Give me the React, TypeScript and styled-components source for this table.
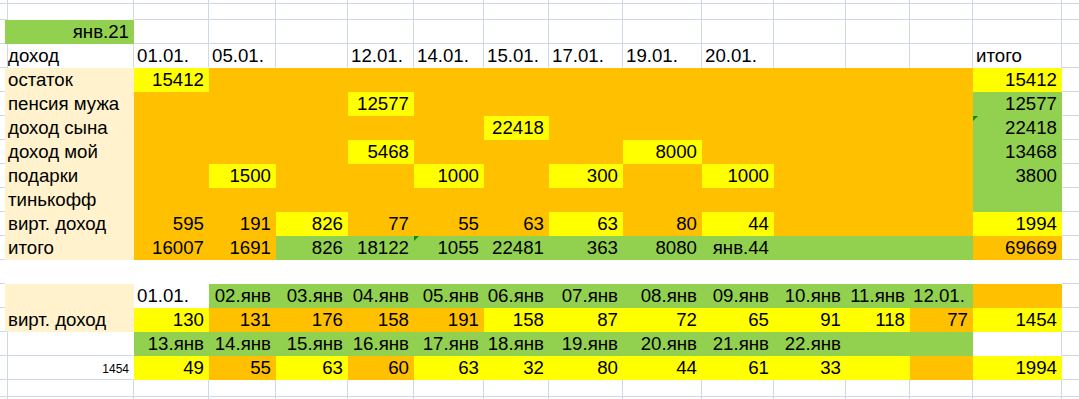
import styled, { createGlobalStyle } from 'styled-components';

type Fill = 'o' | 'y' | 'g' | 'b' | 'w';

interface ICell {
    t?: string;
    f?: Fill;
    flag?: boolean;
    span?: number;
    tiny?: boolean;
    skip?: boolean;
}

const fills: Record<Fill, string> = {
    o: '#FFC000',
    y: '#FFFF00',
    g: '#92D050',
    b: '#FFF2CC',
    w: '#FFFFFF',
};

const GRID_LINE = '#D0D7E5';

const GlobalStyle = createGlobalStyle`
    html, body {
        margin: 0;
        padding: 0;
        background: #fff;
        overflow: hidden;
    }
`;

const Sheet = styled.div`
    display: grid;
    grid-template-columns: 5px 129px 75px 67px 72px 66px 70px 65px 74px 79px 72px 72px 64px 63px 89px 80px;
    grid-template-rows: 4px 16px repeat(15, 24px) 17px 24px;
    width: 1079px;
    height: 399px;
    overflow: hidden;
    font-family: 'Liberation Sans', Arial, sans-serif;
    font-size: 18.67px;
    color: #000;
`;

const Cell = styled.div<{ $fill?: Fill; $right: boolean; $bottom: boolean; $alignRight: boolean; $span: number }>`
    position: relative;
    box-sizing: border-box;
    display: flex;
    align-items: flex-end;
    justify-content: ${({ $alignRight }) => ($alignRight ? 'flex-end' : 'flex-start')};
    grid-row: span ${({ $span }) => $span};
    padding: 0 4px 1px 3px;
    line-height: 20px;
    white-space: nowrap;
    background: ${({ $fill }) => ($fill ? fills[$fill] : 'transparent')};
    border-right: 1px solid ${({ $right }) => ($right ? GRID_LINE : 'transparent')};
    border-bottom: 1px solid ${({ $bottom }) => ($bottom ? GRID_LINE : 'transparent')};
`;

const Tiny = styled.span`
    font-size: 12px;
    line-height: 12px;
    margin-bottom: 3px;
`;

const Flag = styled.span`
    position: absolute;
    top: 0;
    left: 0;
    width: 0;
    height: 0;
    border-top: 5px solid #0b8a0b;
    border-right: 5px solid transparent;
`;

const mk = (f?: Fill) => (t = ''): ICell => ({ t, f });
const o = mk('o');
const y = mk('y');
const g = mk('g');
const b = mk('b');
const e = mk();
const many = (fn: (t?: string) => ICell, n: number) => Array.from({ length: n }, () => fn());

const body: ICell[][] = [
    many(e, 14),
    many(e, 14),
    [g('янв.21'), ...many(e, 13)],
    [e('доход'), e('01.01.'), e('05.01.'), e(), e('12.01.'), e('14.01.'), e('15.01.'), e('17.01.'), e('19.01.'), e('20.01.'), e(), e(), e(), e('итого')],
    [b('остаток'), y('15412'), ...many(o, 11), y('15412')],
    [b('пенсия мужа'), ...many(o, 3), y('12577'), ...many(o, 8), g('12577')],
    [b('доход сына'), ...many(o, 5), y('22418'), ...many(o, 6), { ...g('22418'), flag: true }],
    [b('доход мой'), ...many(o, 3), y('5468'), ...many(o, 3), y('8000'), ...many(o, 4), g('13468')],
    [b('подарки'), o(), y('1500'), o(), o(), y('1000'), o(), y('300'), o(), y('1000'), ...many(o, 3), g('3800')],
    [b('тинькофф'), ...many(o, 12), g()],
    [b('вирт. доход'), o('595'), o('191'), y('826'), o('77'), o('55'), o('63'), y('63'), o('80'), y('44'), ...many(o, 3), y('1994')],
    [b('итого'), o('16007'), o('1691'), g('826'), g('18122'), { ...g('1055'), flag: true }, g('22481'), g('363'), g('8080'), g('янв.44'), g(), g(), g(), o('69669')],
    many(mk('w'), 14),
    [{ ...b('вирт. доход'), span: 2 }, e('01.01.'), g('02.янв'), g('03.янв'), g('04.янв'), g('05.янв'), g('06.янв'), g('07.янв'), g('08.янв'), g('09.янв'), g('10.янв'), g('11.янв'), g('12.01.'), o()],
    [{ f: 'b', skip: true }, y('130'), o('131'), o('176'), o('158'), o('191'), y('158'), y('87'), y('72'), y('65'), y('91'), y('118'), o('77'), y('1454')],
    [e(), g('13.янв'), g('14.янв'), g('15.янв'), g('16.янв'), g('17.янв'), g('18.янв'), g('19.янв'), g('20.янв'), g('21.янв'), g('22.янв'), g(), g(), e()],
    [{ t: '1454', tiny: true }, y('49'), o('55'), y('63'), o('60'), y('63'), y('32'), y('80'), y('44'), y('61'), y('33'), y(), o(), y('1994')],
    many(e, 14),
    many(e, 14),
];

const rows: ICell[][] = body.map((r) => [e(), ...r, e()]);

const isRight = (t: string) => /^\d+$/.test(t) || t.includes('янв');

export default function App() {
    return (
        <>
            <GlobalStyle />
            <Sheet>
                {rows.map((row, ri) =>
                    row.map((cell, ci) => {
                        if (cell.skip) return null;
                        const span = cell.span ?? 1;
                        const next = row[ci + 1];
                        const below = rows[ri + span]?.[ci];
                        const open = !cell.f;
                        return (
                            <Cell
                                key={`${ri}-${ci}`}
                                $fill={cell.f}
                                $span={span}
                                $alignRight={isRight(cell.t ?? '')}
                                $right={open && (!next || !next.f)}
                                $bottom={open && (!below || !below.f)}
                            >
                                {cell.flag && <Flag />}
                                {cell.tiny ? <Tiny>{cell.t}</Tiny> : cell.t}
                            </Cell>
                        );
                    }),
                )}
            </Sheet>
        </>
    );
}
